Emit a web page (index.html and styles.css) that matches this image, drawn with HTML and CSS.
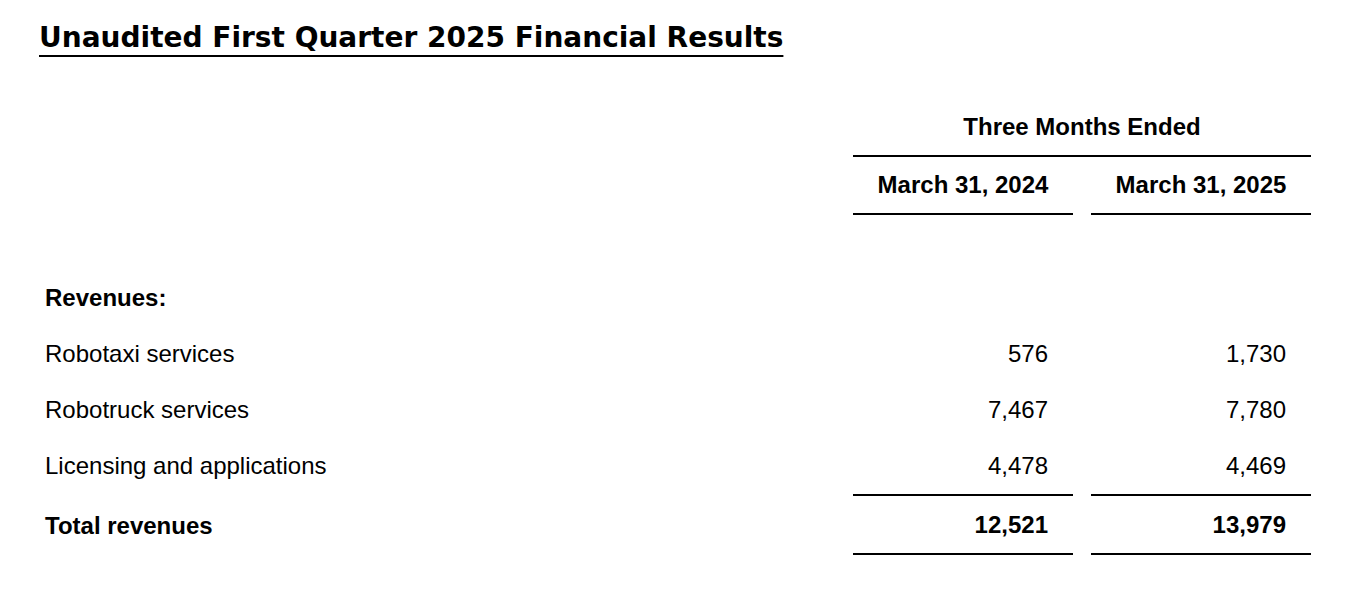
FILE: index.html
```html
<!DOCTYPE html>
<html lang="en">
<head>
<meta charset="utf-8">
<title>Unaudited First Quarter 2025 Financial Results</title>
<link rel="stylesheet" href="styles.css">
</head>
<body>
<main class="page">
  <h1 class="title">Unaudited First Quarter 2025 Financial Results</h1>
  <div class="fin">
    <div class="cell"></div>
    <div class="cell head span rule">Three Months Ended</div>

    <div class="cell"></div>
    <div class="cell head rule">March 31, 2024</div>
    <div class="cell head rule">March 31, 2025</div>

    <div class="cell spacer"></div>
    <div class="cell spacer"></div>
    <div class="cell spacer"></div>

    <div class="cell label bold">Revenues:</div>
    <div class="cell"></div>
    <div class="cell"></div>

    <div class="cell label">Robotaxi services</div>
    <div class="cell num">576</div>
    <div class="cell num">1,730</div>

    <div class="cell label">Robotruck services</div>
    <div class="cell num">7,467</div>
    <div class="cell num">7,780</div>

    <div class="cell label">Licensing and applications</div>
    <div class="cell num">4,478</div>
    <div class="cell num">4,469</div>

    <div class="cell label bold total-label">Total revenues</div>
    <div class="cell num bold total">12,521</div>
    <div class="cell num bold total">13,979</div>
  </div>
</main>
</body>
</html>
```

FILE: styles.css
```css
html, body {
  margin: 0;
  padding: 0;
  background: #ffffff;
  color: #000000;
}

.page {
  padding: 20px 0 0 39px;
}

.title {
  margin: 0;
  font-family: "DejaVu Sans", "Liberation Sans", sans-serif;
  font-weight: 700;
  font-size: 28px;
  line-height: 36px;
  text-decoration: underline;
  text-decoration-thickness: 2px;
  text-underline-offset: 8px;
}

.fin {
  margin-top: 43px;
  margin-left: 6px;
  display: grid;
  grid-template-columns: 790px 220px 220px;
  column-gap: 18px;
  font-family: "Liberation Sans", Arial, sans-serif;
  font-size: 24px;
}

.cell {
  height: 56px;
  display: flex;
  align-items: center;
}

.spacer {
  height: 55px;
}

.span {
  grid-column: 2 / 4;
}

.head {
  font-weight: 700;
  justify-content: center;
}

.rule {
  border-bottom: 2px solid #000;
}

.bold {
  font-weight: 700;
}

.num {
  justify-content: flex-end;
  padding-right: 25px;
}

.total {
  height: 57px;
  border-top: 2px solid #000;
  border-bottom: 2px solid #000;
}

.total-label {
  height: 59px;
  padding-top: 2px;
}
```
